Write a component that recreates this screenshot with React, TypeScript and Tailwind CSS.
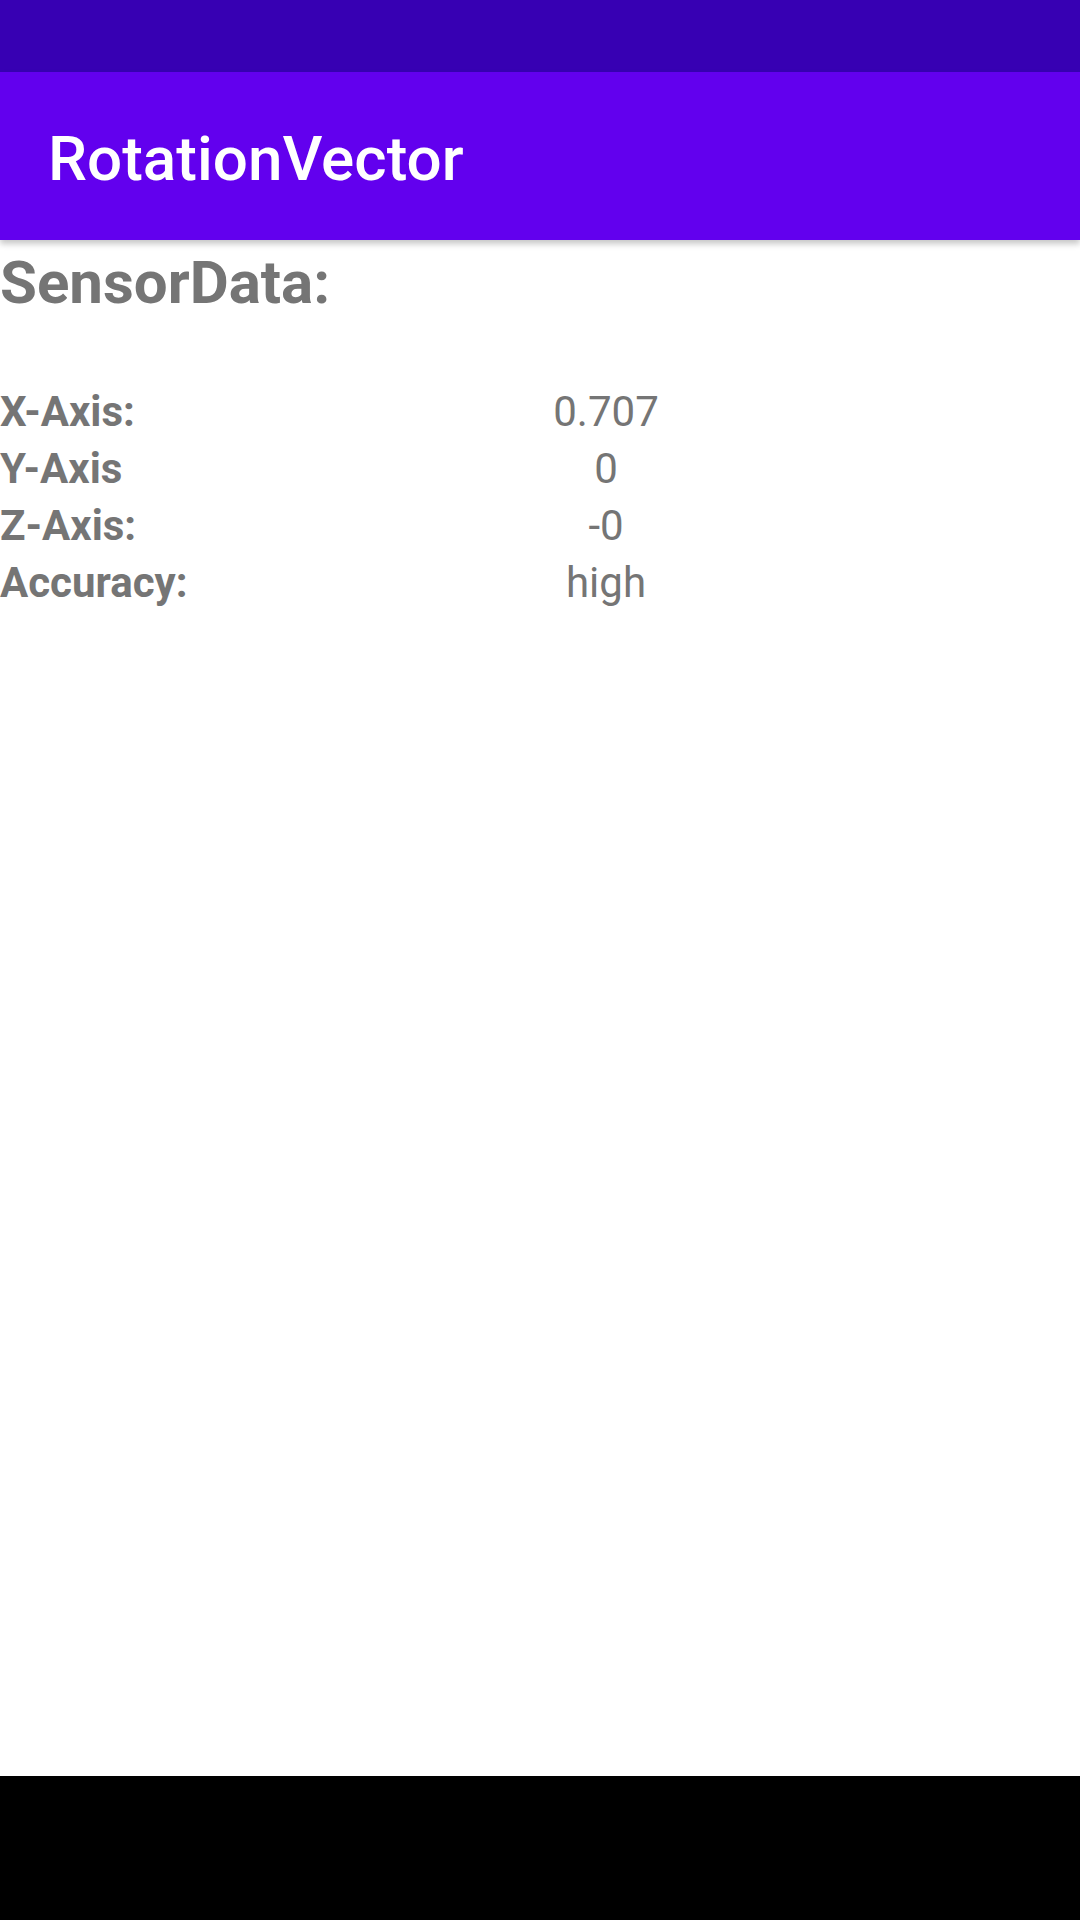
import React from "react";

interface Reading {
  label: string;
  value: string;
}

// 센서 값 목록
const READINGS: Reading[] = [
  { label: "X-Axis:", value: "0.707" },
  { label: "Y-Axis", value: "0" },
  { label: "Z-Axis:", value: "-0" },
  { label: "Accuracy:", value: "high" },
];

const App: React.FC = () => {
  return (
    <div
      className="flex flex-col w-[1080px] h-[1920px] bg-white overflow-hidden"
      style={{ fontFamily: "Roboto, 'Noto Sans', sans-serif" }}
    >
      {/* 상태 표시줄 */}
      <div className="h-[72px] shrink-0 bg-[#3700b3]" />

      {/* 툴바 */}
      <div className="relative z-10 h-[168px] shrink-0 bg-[#6200ee] flex items-center pl-[48px] pt-[6px] shadow-[0_4px_6px_rgba(0,0,0,0.22)]">
        <span className="text-white text-[62px] font-medium leading-none">
          RotationVector
        </span>
      </div>

      {/* 본문 */}
      <div className="flex-1 text-[#757575]">
        <h1 className="mt-[8px] text-[60px] font-bold leading-[70px]">
          SensorData:
        </h1>

        <div className="mt-[65px]">
          {READINGS.map((r) => (
            <div key={r.label} className="flex h-[57px] items-center text-[42px] leading-[57px]">
              <span className="w-[506px] font-bold">{r.label}</span>
              <span className="w-[200px] text-center">{r.value}</span>
            </div>
          ))}
        </div>
      </div>

      {/* 내비게이션 바 */}
      <div className="h-[144px] shrink-0 bg-black" />
    </div>
  );
};

export default App;
